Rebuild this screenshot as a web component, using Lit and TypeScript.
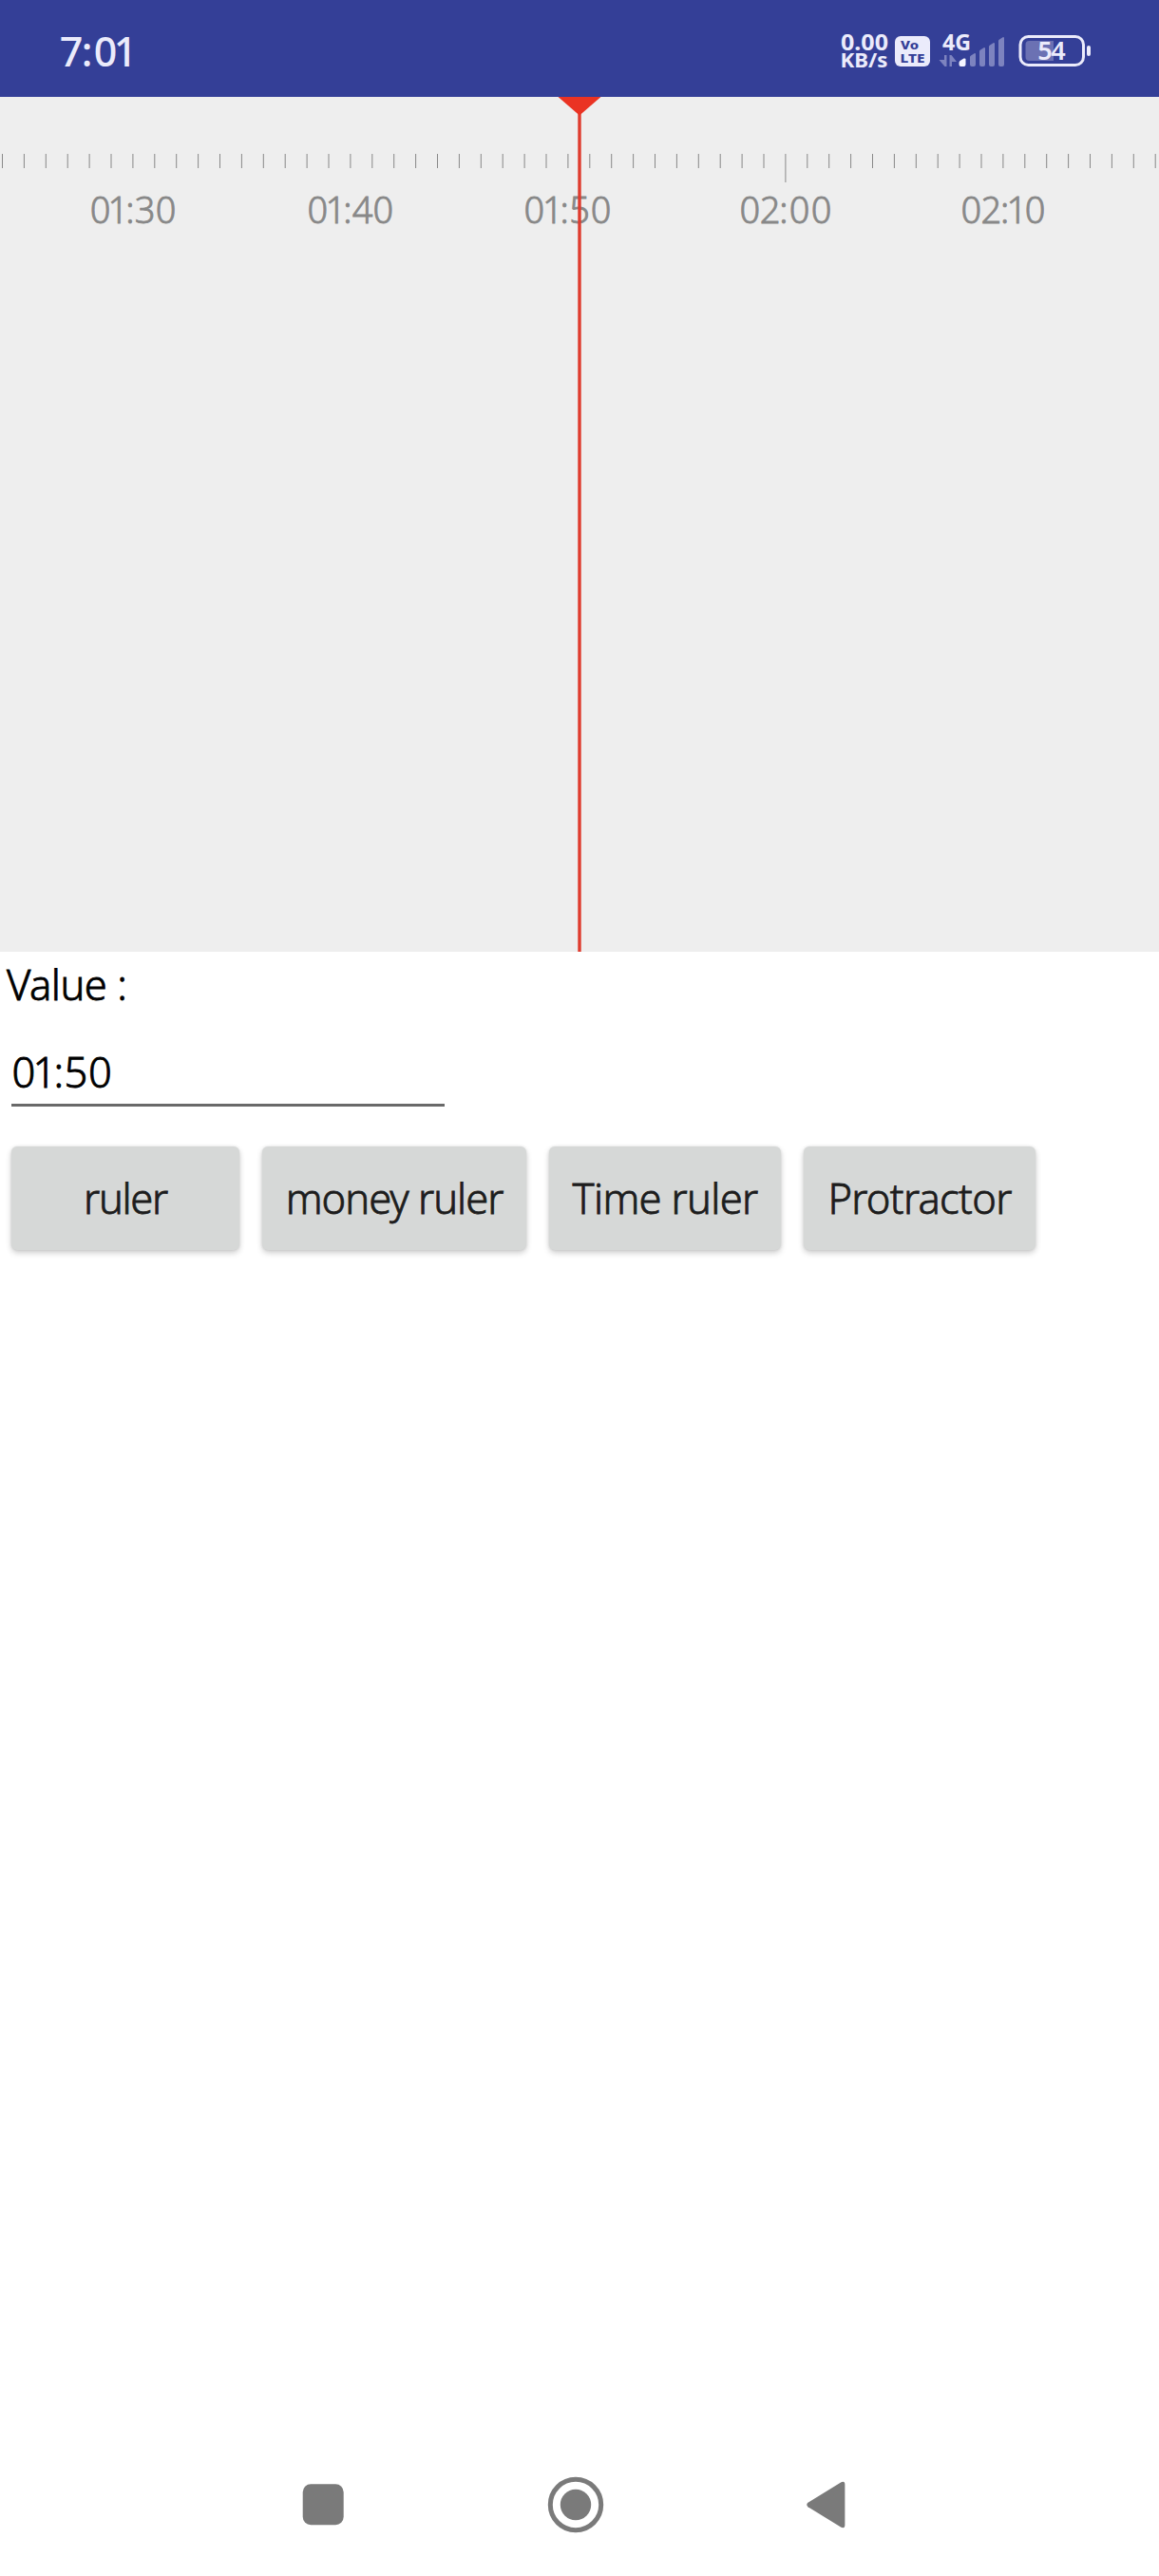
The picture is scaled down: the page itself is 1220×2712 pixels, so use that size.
import { LitElement, html, svg, css } from "lit";
import { customElement } from "lit/decorators.js";

interface RulerLabel {
  text: string;
  x: number[];
}

const LABELS: RulerLabel[] = [
  { text: "01:30", x: [105.5, 124.3, 136.8, 152.5, 174.5] },
  { text: "01:40", x: [334.3, 353.4, 366, 381.5, 403.3] },
  { text: "01:50", x: [562.3, 581.8, 594.2, 610, 632.5] },
  { text: "02:00", x: [789.3, 810.5, 825, 841.5, 864.5] },
  { text: "02:10", x: [1022.3, 1043.3, 1057.7, 1070.3, 1089.7] },
];

const TICK_START = 2.5;
const TICK_GAP = 22.9;
const TICK_COUNT = 54;
const HOUR_TICK = 36;

@customElement("status-bar")
export class StatusBar extends LitElement {
  static styles = css`
    :host { display: block; height: 102px; background: #343f97; }
    svg { display: block; }
    text { font-family: "Noto Sans", sans-serif; fill: #ebebfb; text-anchor: middle; }
    .clock { font-size: 43px; font-weight: 500; }
    .net { font-size: 23.5px; font-weight: 700; text-anchor: start; }
    .unit { font-size: 21px; }
    .badge { font-size: 13px; font-weight: 800; fill: #343f97; text-anchor: start; }
    .pct { font-size: 27px; font-weight: 600; }
  `;
  render() {
    return html`<svg width="1220" height="102" viewBox="0 0 1220 102">
      <text class="clock" x="75 91.5 111 132" y="69.500">7:01</text>
      <text class="net"><tspan x="885" y="52.500" textLength="50" lengthAdjust="spacingAndGlyphs">0.00</tspan><tspan class="unit" x="884.500" y="71" textLength="50" lengthAdjust="spacingAndGlyphs">KB/s</tspan></text>
      <rect x="942" y="38" width="37" height="32" rx="6" fill="#ebebfb" />
      <text class="badge"><tspan x="948" y="52" textLength="19" lengthAdjust="spacingAndGlyphs">Vo</tspan><tspan x="947.500" y="65.500" textLength="26" lengthAdjust="spacingAndGlyphs">LTE</tspan></text>
      <text class="net" x="992" y="52.500" textLength="30" lengthAdjust="spacingAndGlyphs">4G</text>
      <g fill="#7d83bf">
        <path d="M994 58h2.500v12h-2l-6-7h5.500z M999.500 70h2.500v-5h5l-5.500-7h-2z" />
        <path d="M1021 60q0-1 1-1.500l4-2.500q1 0 1 1v11q0 2-2 2h-2q-2 0-2-2z" />
        <path d="M1031 54q0-1 1-1.500l4-2.500q1 0 1 1v17q0 2-2 2h-2q-2 0-2-2z" />
        <path d="M1041 49q0-1 1-1.500l4-2.500q1 0 1 1v22q0 2-2 2h-2q-2 0-2-2z" />
        <path d="M1051 43q0-1 1-1.500l4-2.500q1 0 1 1v28q0 2-2 2h-2q-2 0-2-2z" />
      </g>
      <path d="M1009.500 66q0-1 1-2l4-2.500q2-.5 2 1v5.500q0 2-2 2h-3q-2 0-2-2z" fill="#f4f4ff" />
      <rect x="1074" y="38.500" width="66.500" height="30" rx="8.500" fill="none" stroke="#ebebfb" stroke-width="3" />
      <path d="M1083.500 43h25.500v21h-25.500q-4 0-4-4v-13q0-4 4-4z" fill="#6b71b3" />
      <rect x="1144" y="48" width="4" height="11" rx="2" fill="#ebebfb" />
      <text class="pct" x="1100 1114" y="63.300">54</text>
    </svg>`;
  }
}

@customElement("time-ruler")
export class TimeRuler extends LitElement {
  static styles = css`
    :host { display: block; height: 900px; background: #eeeeee; }
    svg { display: block; }
    text { font-family: "Noto Sans", sans-serif; font-size: 38px; font-weight: 300; fill: #888; stroke: #888; stroke-width: 0.8px; text-anchor: middle; }
  `;
  render() {
    const ticks = Array.from({ length: TICK_COUNT }, (_, i) => i);
    return html`<svg width="1220" height="900" viewBox="0 0 1220 900">
      ${ticks.map((i) => svg`<rect x=${TICK_START + TICK_GAP * i - 0.5} y="60" width="1" height=${i === HOUR_TICK ? 30 : 15} fill="#888" />`)}
      ${LABELS.map((l) => svg`<text x=${l.x.join(" ")} y="132.600">${l.text}</text>`)}
      <rect x="608.300" y="0" width="3.400" height="900" fill="#df3b2e" />
      <path d="M587.500 0h45L610 19.500z" fill="#ea3323" />
    </svg>`;
  }
}

@customElement("nav-bar")
export class NavBar extends LitElement {
  static styles = css`
    :host { display: flex; align-items: center; justify-content: center; height: 150px; padding-right: 7.600px; gap: 214px; box-sizing: border-box; }
    svg { display: block; width: 60px; height: 60px; fill: #7a7a7a; overflow: visible; }
  `;
  render() {
    return html`
      <svg viewBox="0 0 60 60"><rect x="16.700" y="8.300" width="43" height="43" rx="8.500" /></svg>
      <svg viewBox="0 0 60 60"><circle cx="30" cy="30" r="26.700" fill="none" stroke="#7a7a7a" stroke-width="5" /><circle cx="30" cy="30" r="16.200" /></svg>
      <svg viewBox="0 0 60 60"><path d="M0.500 27.800L35.500 6.200Q39.400 4.500 39.400 9V51Q39.400 55.500 35.500 53.800L0.500 32.200Q-2 30 0.500 27.800z" /></svg>
    `;
  }
}

@customElement("app-root")
export class AppRoot extends LitElement {
  static styles = css`
    :host { display: flex; flex-direction: column; width: 1220px; height: 2712px; background: #fff; overflow: hidden; font-family: "Noto Sans", sans-serif; font-weight: 300; font-size: 43.500px; color: #000; }
    .form { flex: 1; display: flex; flex-direction: column; }
    .label { height: 72px; line-height: 69px; padding-left: 7px; letter-spacing: -0.500px; -webkit-text-stroke: 0.800px currentColor; }
    .field { box-sizing: border-box; width: 456px; height: 91px; margin-left: 12px; border-bottom: 3px solid #696969; }
    .field svg { display: block; overflow: visible; }
    .field text { text-anchor: middle; stroke: #000; stroke-width: 0.800px; }
    .buttons { display: flex; gap: 24px; padding: 42px 12px 0; }
    .btn { height: 109px; width: 244px; padding: 0; border: 0; border-radius: 6px; background: #d6d8d7; color: #1d1d1d; font: inherit; line-height: 109px; text-align: center; white-space: nowrap; letter-spacing: -0.700px; -webkit-text-stroke: 0.800px currentColor; box-shadow: 0 3px 6px rgba(0,0,0,.2), 0 0 3px rgba(0,0,0,.1); }
    .first { width: 240px; letter-spacing: -1.300px; }
    .wide { width: 278px; letter-spacing: -1px; }
  `;
  render() {
    return html`
      <status-bar></status-bar>
      <time-ruler></time-ruler>
      <main class="form">
        <div class="label">Value :</div>
        <div class="field">
          <svg width="456" height="88"><text x="13 34.800 49.800 68 93.500" y="70.500">01:50</text></svg>
        </div>
        <div class="buttons">
          <button class="btn first">ruler</button>
          <button class="btn wide">money ruler</button>
          <button class="btn">Time ruler</button>
          <button class="btn">Protractor</button>
        </div>
      </main>
      <nav-bar></nav-bar>
    `;
  }
}
